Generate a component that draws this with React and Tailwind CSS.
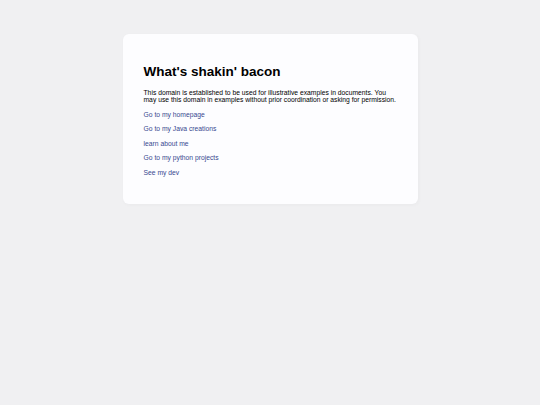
import React from 'react';

const links = [
  'Go to my homepage',
  'Go to my Java creations',
  'learn about me',
  'Go to my python projects',
  'See my dev',
];

export default function App() {
  return (
    <div className="min-h-screen bg-[#f0f0f2] pt-[34px] font-['Liberation_Sans',Arial,sans-serif]">
      <div className="mx-auto w-[295px] rounded-[6px] bg-[#fdfdff] px-[21px] py-[21px] shadow-[1px_1px_3px_1px_rgba(0,0,0,0.02)]">
        <h1 className="my-[9px] text-[13.5px] font-bold leading-[1.15] text-black">
          What's shakin' bacon
        </h1>
        <p className="my-[6.75px] text-[6.75px] leading-[1.15] text-black">
          This domain is established to be used for illustrative examples in documents. You
          may use this domain in examples without prior coordination or asking for permission.
        </p>
        {links.map((label) => (
          <p key={label} className="my-[6.75px] text-[6.75px] leading-[1.15]">
            <a href="#" className="text-[#38488f] no-underline">
              {label}
            </a>
          </p>
        ))}
      </div>
    </div>
  );
}
